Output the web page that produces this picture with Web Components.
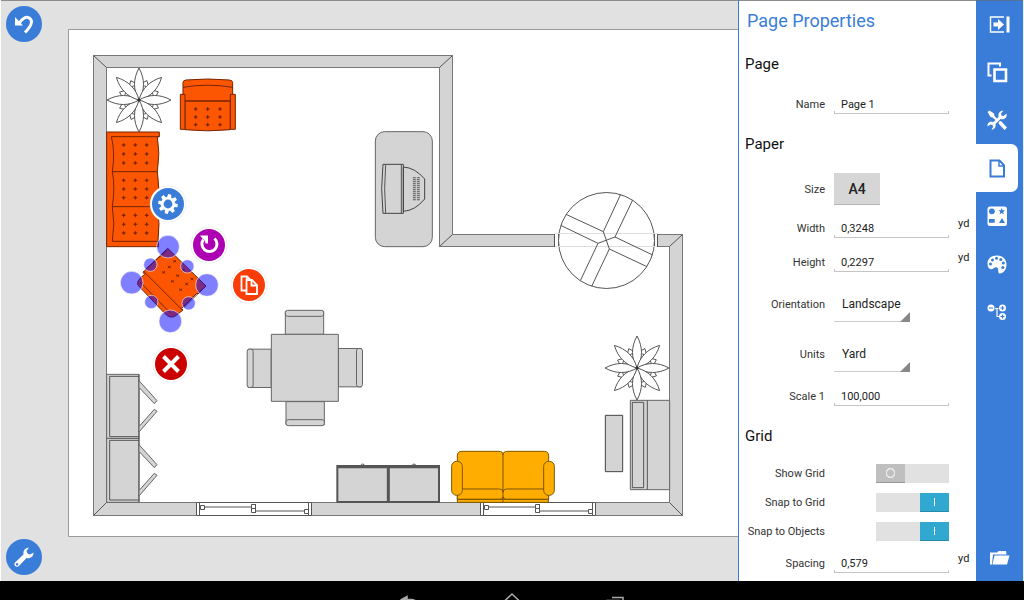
<!DOCTYPE html>
<html lang="en">
<head>
<meta charset="utf-8">
<meta name="viewport" content="width=device-width, initial-scale=1">
<title>Floor plan editor</title>
<style>
  html, body { height: 100%; margin: 0; }
  body { font-family: Roboto, "Noto Sans", sans-serif; font-size: 11px; color: #222; background: #fff; }
</style>
</head>
<body>
<plan-app></plan-app>
<script>
const define = (name, html, setup) => {
  const template = document.createElement('template');
  template.innerHTML = html;
  customElements.define(name, class extends HTMLElement {
    constructor() {
      super();
      this.attachShadow({ mode: 'open' }).append(template.content.cloneNode(true));
    }
    connectedCallback() { if (setup) setup(this, this.shadowRoot); }
  });
};

/* Round canvas action; the icon is slotted. */
define('round-button', `
<style>
  :host { display: block; width: 36px; height: 36px; }
  button { display: grid; place-items: center; box-sizing: border-box; width: 100%; height: 100%; padding: 0;
    border: var(--ring, 0) solid #fff; border-radius: 50%; background: var(--fill, #3a7dd8);
    box-shadow: var(--glow, none); color: #fff; cursor: pointer; }
</style>
<button type="button"><slot></slot></button>`, (el, root) => {
  root.querySelector('button').setAttribute('aria-label', el.getAttribute('label'));
});

const across = [0, 45, 90, 135, 180, 225, 270, 315];
const plus = (x, y, r = 6) => `M${x - r} ${y}h${2 * r}M${x} ${y - r}v${2 * r}`;
const cross = (x, y, r = 4) => `M${x - r} ${y - r}l${2 * r} ${2 * r}M${x + r} ${y - r}l${-2 * r} ${2 * r}`;
const dots = (xs, ys) => ys.flatMap(y => xs.map(x => plus(x, y) + `M${x - 2} ${y - 2}h4v4h-4z`)).join('');

define('floor-plan', `
<style>
  :host { display: block; position: relative; overflow: hidden; background: #e1e1e1; box-shadow: inset 1px 0 #fff, inset 0 1px #8c8c8c; }
  .plan { display: block; width: 100%; height: 100%; }
  .plan * { vector-effect: non-scaling-stroke; }
  .line { fill: none; stroke: #555; stroke-width: 1; }
  .grey { fill: #d4d4d4; stroke: #666; stroke-width: 1; }
  .white { fill: #fff; stroke: #555; stroke-width: 1; }
  .orange { fill: #fd5602; stroke: #742600; stroke-width: 1; }
  .stitch { fill: none; stroke: #742600; stroke-width: 1; }
  .spots { fill: none; stroke: #742600; stroke-width: .8; }
  .amber { fill: #ffad00; stroke: #7d5700; stroke-width: 1; }
  .handle { fill: #00f; fill-opacity: .5; stroke: #fff; stroke-opacity: .6; }
  round-button { position: absolute; }
  .act { --ring: 2px; --glow: 0 0 1px #bbb; }
  .undo { left: 6px; top: 6px; }
  .wrench { left: 6px; bottom: 6px; }
  .gear { left: 150px; top: 186px; }
  .turn { left: 191px; top: 227px; --fill: #ad00b3; }
  .copy { left: 231px; top: 267px; --fill: #fa3c08; }
  .drop { left: 153px; top: 346px; --fill: #cb0000; }
</style>
<svg class="plan" role="img" aria-label="Floor plan of a living room">
  <defs>
    <g id="plant">
      ${across.map(a => `<g transform="rotate(${a + 22})"><path class="white" d="M0 0Q-10 -12 0 -21Q10 -12 0 0"/><path class="line" d="M-6 -17Q0 -13 6 -17M-5 -14Q0 -10 5 -14"/></g>`).join('')}
      ${across.map(a => `<path class="white" transform="rotate(${a})" d="M0 0C-6 -10 -6 -21 0 -32C6 -21 6 -10 0 0"/>`).join('')}
      <circle r="1.5" fill="#333"/>
    </g>
    <g id="window">
      <rect class="white" x="196.500" y="502.500" width="115" height="13"/>
      <path class="line" d="M199.500 502.500v13M308.500 502.500v13M203.500 507h49M255.500 511h49"/>
      <path class="white" d="M200.500 505.500h4v4h-4zM251.500 504.500h4v4h-4zM251.500 508.500h4v4h-4zM304.500 509.500h4v4h-4z"/>
      <path class="line" d="M255.500 504v9" stroke-width="2"/>
    </g>
    <g id="doors">
      <path class="grey" d="M147 62L201 122L193 131L147 82zM147 200L193 148L201 154L147 216z"/>
    </g>
    <g id="chair">
      <rect class="grey" x="136" y="34" width="115" height="69"/>
      <rect class="grey" x="136" y="31" width="115" height="18" rx="7"/>
    </g>
  </defs>

  <rect x="68.500" y="29.500" width="100%" height="507" fill="#fff" stroke="#999"/>

  <path fill="#d4d4d4" stroke="#777" fill-rule="evenodd" d="M93.500 55.500H452.500V234.500H682.500V515.500H93.500zM106.500 67.500V502.500H669.500V246.500H439.500V67.500z"/>
  <path class="line" d="M93.500 55.500l13 12M452.500 55.500l-13 12M439.500 246.500l13-12M682.500 234.500l-13 12M682.500 515.500l-13-13M93.500 515.500l13-13"/>
  <use href="#window"/>
  <use href="#window" x="284"/>

  <rect x="555" y="233" width="103" height="14" fill="#fff"/>
  <path class="line" d="M554.500 234v13M558.500 234v13M654.500 234v13M657.500 234v13"/>
  <circle class="white" cx="606.500" cy="240.500" r="48"/>
  <path d="M555 233.500H657M555 246.500H657" stroke="#ddd"/>
  <g transform="translate(540 180) scale(.33333)">
    <path class="line" d="M242 43L190 155L208 207L321 260M278 60L225 171L338 225M78 103L190 155M62 136L174 190L121 302M208 207L155 319M174 190L225 171"/>
  </g>

  <g transform="scale(.33333)">
    <path class="orange" d="M549 303V248Q549 241 558 240Q623 234 688 240Q698 241 698 248V303zM555 303H691V389Q623 396 555 389z"/>
    <path class="stitch" d="M549 262Q623 249 698 262"/>
    <path class="orange" d="M541 283h14v105h-14zM691 283h15v105h-15z"/>
    <path class="spots" d="${dots([587, 623, 660], [327, 351, 374])}"/>
  </g>

  <g transform="translate(90 120) scale(.33333)">
    <path class="orange" d="M50 36H208V50H202Q211 100 202 155Q211 205 202 260Q211 310 204 364L206 380H50z"/>
    <path class="stitch" d="M208 50H64Q76 95 67 155Q76 200 67 260Q76 310 67 364H206M67 155H202M67 260H202"/>
    <path class="spots" d="${dots([101, 136, 170], [75, 102, 129, 181, 207, 233, 286, 313, 339])}"/>
  </g>
  <use href="#plant" x="139" y="100"/>

  <g transform="translate(330 120) scale(.33333)">
    <rect class="grey" x="136" y="35" width="171" height="345" rx="28"/>
    <path class="grey" d="M220 141Q255 143 284 177V237Q255 272 220 274zM159 133Q151 206 159 280H220V133z" style="stroke:#444"/>
    <path class="line" d="M167 133Q161 206 167 280M214 133V280"/>
    <path class="line" d="M253 172v72M265 172v72" style="stroke-width:3px;stroke-dasharray:1 1"/>
  </g>

  <g transform="translate(90 360) scale(.33333)">
    <rect class="grey" x="50" y="43" width="97" height="384"/>
    <path class="line" d="M50 235H147M147 49H59V230H147M147 241H59V420H147M147 43V427"/>
    <use href="#doors"/>
    <use href="#doors" y="192"/>
  </g>

  <g transform="translate(240 300) scale(.33333)">
    <use href="#chair"/>
    <use href="#chair" transform="rotate(90 194.500 204)"/>
    <use href="#chair" transform="rotate(180 194.500 204)"/>
    <use href="#chair" transform="rotate(270 194.500 204)"/>
    <rect class="grey" x="94" y="103" width="201" height="201"/>
  </g>

  <g transform="translate(330 440) scale(.33333)">
    <path class="grey" d="M90 78Q98 66 106 78zM244 78Q252 66 260 78z"/>
    <rect class="grey" x="22" y="78" width="305" height="108" style="stroke:#555;stroke-width:2px"/>
    <path class="line" d="M21 80H329M175 80V187" style="stroke-width:3px"/>
    <path class="amber" d="M382 165H655V187H382z"/>
    <path class="amber" d="M382 150V48Q382 34 396 34H506Q519 34 519 44Q519 34 533 34H643Q656 34 656 48V178H382z"/>
    <path d="M519 40V187M382 147H509Q519 147 519 157Q519 147 529 147H656M382 178H509Q519 178 519 170Q519 178 529 178H656" fill="none" stroke="#7d5700"/>
    <rect class="amber" x="365" y="64" width="32" height="102" rx="15"/>
    <rect class="amber" x="641" y="64" width="32" height="102" rx="15"/>
  </g>

  <g transform="translate(590 325) scale(.33333)">
    <rect class="grey" x="121" y="226" width="118" height="268"/>
    <path class="line" d="M172 226V494M127 232H161V488H127z"/>
    <rect class="grey" x="46" y="271" width="52" height="169" style="stroke:#444"/>
  </g>
  <use href="#plant" x="637" y="368"/>

  <g transform="translate(110 220) scale(.33333)">
    <path class="orange" d="M173 85L288 198L264 222L260 220L215 265L219 270L200 285Q182 300 164 280L90 202Q70 188 104 163L99 157z"/>
    <path class="stitch" d="M100 153L217 270M106 148L170 92M222 262L280 205M90 186L180 278"/>
    <path class="spots" d="${[[194,124],[220,150],[246,177],[178,141],[203,167],[230,192],[161,157],[187,184],[212,209]].map(p => cross(...p) + `M${p[0] - 4} ${p[1]}h8`).join('')}"/>
    ${[[174,80,34],[65,188,34],[291,195,34],[181,304,34],[121,134,20],[232,139,20],[124,246,20],[236,250,20]].map(([x, y, r]) => `<circle class="handle" cx="${x}" cy="${y}" r="${r}"/>`).join('')}
  </g>
</svg>
<round-button class="undo" label="Undo">
  <svg width="24" height="24" viewBox="0 0 24 24"><path d="M7 11.500C10 6.500 14.500 3.500 18 6.500C21.500 10 19 14.500 13 20.500" fill="none" stroke="#fff" stroke-width="3"/><path d="M3 5L11 13.500H3z" fill="#fff"/></svg>
</round-button>
<round-button class="wrench" label="Tools">
  <svg width="24" height="24" viewBox="0 0 24 24"><path fill="#fff" fill-rule="evenodd" d="M17 2.500L14.500 6L15.500 8.500L18 9.500L21.500 7.500Q21.500 12 17.500 13Q16 13.500 14.500 13L7 21Q5 22.500 3 21Q1.500 19 3 17.500L11.500 9.500Q10.500 3.500 17 2.500zM5 18a1.300 1.300 0 1 0 .1 0z"/></svg>
</round-button>
<round-button class="act gear" label="Settings">
  <svg width="24" height="24" viewBox="-12 -12 24 24" fill="#fff">${across.map(a => `<path d="M-2 -6L-1.600 -9.800H1.600L2 -6z" transform="rotate(${a + 10})"/>`).join('')}<circle r="5.800" fill="none" stroke="#fff" stroke-width="2.800"/></svg>
</round-button>
<round-button class="act turn" label="Rotate">
  <svg width="24" height="24" viewBox="0 0 24 24"><path d="M17.500 5.500A7.500 7.500 0 1 1 6.500 6.500" fill="none" stroke="#fff" stroke-width="3"/><path d="M3 2.500H11V10.500H8.500L8 7.500L5 5z" fill="#fff"/></svg>
</round-button>
<round-button class="act copy" label="Duplicate">
  <svg width="24" height="24" viewBox="0 0 24 24" fill="none" stroke="#fff" stroke-width="1.800"><path d="M9 17.500H4.500V3.500H10L13 6.500"/><path d="M9.500 7H15L20 12V21H9.500z"/><path d="M14.500 7V12.500H20M10 3.500V7"/></svg>
</round-button>
<round-button class="act drop" label="Delete">
  <svg width="24" height="24" viewBox="0 0 24 24"><path d="M4.500 4.500L19.500 19.500M19.500 4.500L4.500 19.500" stroke="#fff" stroke-width="4"/></svg>
</round-button>`);

/* One property: a right-aligned label, its control, and an optional unit. */
const rowStyle = `
  :host { display: grid; grid-template-columns: 86px 115px 1fr; column-gap: 9px; align-items: center; height: 34px; }
  label { text-align: right; white-space: nowrap; color: #333; justify-self: end; }
  input, select, button { font: inherit; color: inherit; margin: 0; border: 0; border-radius: 0; outline: 0; box-sizing: border-box; }
`;
define('text-row', `
<style>${rowStyle}
  input { width: 100%; height: 20px; padding: 0 7px;
    background: linear-gradient(#c4c4c4, #c4c4c4) 0 100% / 100% 1px no-repeat, linear-gradient(#c4c4c4, #c4c4c4) 0 100% / 1px 3px no-repeat, linear-gradient(#c4c4c4, #c4c4c4) 100% 100% / 1px 3px no-repeat; }
  .unit { align-self: start; line-height: 26px; }
</style>
<label for="field"></label><input id="field" type="text"><span class="unit"><slot></slot></span>`, (el, root) => {
  root.querySelector('label').textContent = el.getAttribute('label');
  root.querySelector('input').value = el.getAttribute('value');
});
define('choice-row', `
<style>${rowStyle}
  :host { height: 50px; }
  select { appearance: none; width: 76px; height: 36px; padding: 0 8px; font-size: 12px;
    background: linear-gradient(135deg, transparent 47%, #888 53%) 100% 100% / 10px 10px no-repeat, linear-gradient(#ccc, #ccc) 0 100% / 100% 1px no-repeat; }
</style>
<label for="field"></label><select id="field"></select>`, (el, root) => {
  root.querySelector('label').textContent = el.getAttribute('label');
  const select = root.querySelector('select');
  if (!select.options.length) el.getAttribute('options').split('|').forEach(o => select.add(new Option(o)));
});
define('size-row', `
<style>${rowStyle}
  :host { height: 44px; }
  button { justify-self: start; width: 46px; height: 32px; padding: 0; font-size: 14px; font-weight: 500; background: #d6d6d6; box-shadow: inset 0 -1px #b4b4b4; color: #222; }
</style>
<label for="field">Size</label><button id="field" type="button"><slot></slot></button>`);
define('toggle-row', `
<style>${rowStyle}
  :host { height: 29px; }
  input { appearance: none; justify-self: end; display: flex; width: 73px; height: 19px; background: #e1e1e1; }
  input::before { content: ""; width: 29px; height: 19px; box-sizing: border-box; border-bottom: 1px solid #999;
    background: radial-gradient(circle at 50% 50%, transparent 3px, #e8e8e8 4px, #e8e8e8 5px, transparent 5px) #bfbfbf; }
  input:checked { justify-content: flex-end; }
  input:checked::before { border-color: #268aa9; background: linear-gradient(#fff, #fff) 50% 50% / 1px 8px no-repeat #30a8d0; }
</style>
<label for="field"></label><input id="field" type="checkbox">`, (el, root) => {
  root.querySelector('label').textContent = el.getAttribute('label');
  root.querySelector('input').checked = el.hasAttribute('checked');
});

define('property-section', `
<style>
  :host { display: block; }
  h2 { margin: 0; padding-left: 6px; font-size: 15px; font-weight: 400; line-height: 46px; color: #111; }
</style>
<h2></h2><slot></slot>`, (el, root) => { root.querySelector('h2').textContent = el.getAttribute('heading'); });

define('page-panel', `
<style>
  :host { display: block; box-sizing: border-box; border-left: 1px solid #3a7dd8; background: #fff; box-shadow: inset 0 1px #8c8c8c; overflow: hidden; }
  h1 { margin: 0; padding-left: 8px; font-size: 18px; font-weight: 400; line-height: 41px; color: #3a7dd8; }
</style>
<h1>Page Properties</h1>
<property-section heading="Page">
  <text-row label="Name" value="Page 1"></text-row>
</property-section>
<property-section heading="Paper">
  <size-row>A4</size-row>
  <text-row label="Width" value="0,3248">yd</text-row>
  <text-row label="Height" value="0,2297">yd</text-row>
  <choice-row label="Orientation" options="Landscape|Portrait"></choice-row>
  <choice-row label="Units" options="Yard|Meter|Foot"></choice-row>
  <text-row label="Scale 1" value="100,000"></text-row>
</property-section>
<property-section heading="Grid">
  <toggle-row label="Show Grid"></toggle-row>
  <toggle-row label="Snap to Grid" checked></toggle-row>
  <toggle-row label="Snap to Objects" checked></toggle-row>
  <text-row label="Spacing" value="0,579">yd</text-row>
</property-section>`);

define('tool-rail', `
<style>
  :host { display: flex; flex-direction: column; box-sizing: border-box; border-right: 1px solid #e8eef8; background: #3a7dd8; box-shadow: inset 0 1px #56709a; }
  button { display: grid; place-items: center; width: 42px; height: 48px; padding: 0; border: 0; background: none; color: #fff; }
  .active { background: #fff; color: #3a7dd8; border-radius: 0 7px 7px 0; }
  .last { margin-top: auto; }
  svg { width: 28px; height: 28px; fill: none; }
</style>
<button type="button" aria-label="Collapse panel"><svg viewBox="0 0 28 28"><path d="M21 7H7.500V22H21" stroke="#fff" stroke-width="1.400"/><path d="M10.500 12.500h4.500v-3.500l6 5.500l-6 5.500v-3.500h-4.500zM23.500 6.500h3v16h-3z" fill="#fff"/></svg></button>
<button type="button" aria-label="Layers"><svg viewBox="0 0 28 28"><path d="M8.500 17.500H5.500V5.500H17V8.500" stroke="#fff" stroke-width="2"/><path d="M11.500 11.500h11.500v11.500h-11.500z" stroke="#fff" stroke-width="2.600"/></svg></button>
<button type="button" aria-label="Tools"><svg viewBox="0 0 28 28"><path fill="#fff" d="M4.500 6L6.500 4.500L11 7.500L11.500 10L14.500 13L13 14.500L9.500 11.500L7.500 11zM16 15.500L18 15L24 21.500L21.500 24L15.500 17.500z"/><path fill="#fff" d="M20.500 4.500L18 7.500L18.500 9.500L20.500 10L23.500 7.500Q24.500 11 21 13Q19 13.500 17.500 13L12.500 18Q13.500 22.500 8.500 24L10 21L9.500 19L7.500 18.500L4.500 20.500Q4 16.500 8 15.500L10.500 16L15.500 11Q14.500 5 20.500 4.500z"/></svg></button>
<button type="button" class="active" aria-label="Page properties"><svg viewBox="0 0 28 28"><path d="M7.500 6.500H16.500L21 11.500V22.500H7.500z" stroke="currentColor" stroke-width="2"/><path d="M16 6.500V12H21" stroke="currentColor" stroke-width="1.500"/></svg></button>
<button type="button" aria-label="Shapes"><svg viewBox="0 0 28 28"><rect x="4.500" y="4.500" width="19.500" height="19.500" rx="2.500" fill="#fff"/><path fill="#3a7dd8" d="M6 17h5.700v3.700H6zM16 21L19 16L22 21zM18.700 6L19.600 8.200L22 8.300L20.200 10L20.800 12.200L18.700 11L16.600 12.200L17.200 10L15.500 8.300L17.800 8.200z"/><circle cx="8.900" cy="9.300" r="2.900" fill="#3a7dd8"/></svg></button>
<button type="button" aria-label="Colours"><svg viewBox="0 0 28 28"><path fill="#fff" d="M14 5.500C20 5.500 23.500 9.500 23.500 14.500C23.500 20 20 23.500 17 23.500C14 23.500 16.500 19 14 17.500C11.500 16 10 20.500 7 19C5 18 4.500 15.500 4.500 13.500C4.500 9 8 5.500 14 5.500z"/><g fill="#3a7dd8"><circle cx="7.500" cy="14" r="1.500"/><circle cx="9.500" cy="10" r="1.500"/><circle cx="13.500" cy="8.200" r="1.500"/><circle cx="17.800" cy="9.500" r="1.500"/><circle cx="20.300" cy="13" r="1.500"/><circle cx="19.800" cy="17.500" r="1.500"/></g></svg></button>
<button type="button" aria-label="Tree"><svg viewBox="0 0 28 28"><g fill="#fff"><circle cx="8" cy="10" r="3.500"/><circle cx="19.500" cy="10" r="3.500"/><circle cx="19.500" cy="18.500" r="3.500"/></g><path d="M12 10.500h3.500M14 10.500V18.500h2" stroke="#fff" stroke-width="1.200"/><path d="M6 10h4M17.500 10h4M19.500 8v4M17.500 18.500h4M19.500 16.500v4" stroke="#3a7dd8" stroke-width="1.200"/></svg></button>
<button type="button" class="last" aria-label="Open"><svg viewBox="0 0 28 28"><path fill="#fff" d="M7 21.500V9.500H14L15.500 8H23L23.500 11.500H10L9 21.500zM11.500 12.500H26.500L24 21.500H9.500z"/></svg></button>`);

define('system-bar', `
<style>
  :host { display: flex; justify-content: center; height: 19px; overflow: hidden; background: #000; }
  button { width: 103px; height: 36px; padding: 10px 0 0; border: 0; background: none; }
  svg { display: block; margin: 0 auto; fill: none; stroke: #aaa; stroke-width: 1.500; }
</style>
<button type="button" aria-label="Back"><svg width="24" height="24" viewBox="0 0 24 24"><path d="M10 7.500H15Q20 8 20 13T15 18H8"/><path d="M4.500 7.500L10 4.500V10.500z" fill="#aaa"/></svg></button>
<button type="button" aria-label="Home"><svg width="24" height="24" viewBox="0 0 24 24"><path d="M3 10.500L12 2L21 10.500H18V19H6V10.500z"/></svg></button>
<button type="button" aria-label="Recent apps"><svg width="24" height="24" viewBox="0 0 24 24"><path d="M9 5.500H20V14M4 8.500H16.500V18H4z"/></svg></button>`);

define('plan-app', `
<style>
  :host { display: flex; flex-direction: column; height: 100vh; }
  main { flex: 1; min-height: 0; display: flex; }
  floor-plan { flex: 1; min-width: 0; }
  page-panel { flex: 0 0 238px; }
  tool-rail { flex: 0 0 48px; }
</style>
<main><floor-plan></floor-plan><page-panel></page-panel><tool-rail></tool-rail></main>
<system-bar></system-bar>`);
</script>
</body>
</html>
